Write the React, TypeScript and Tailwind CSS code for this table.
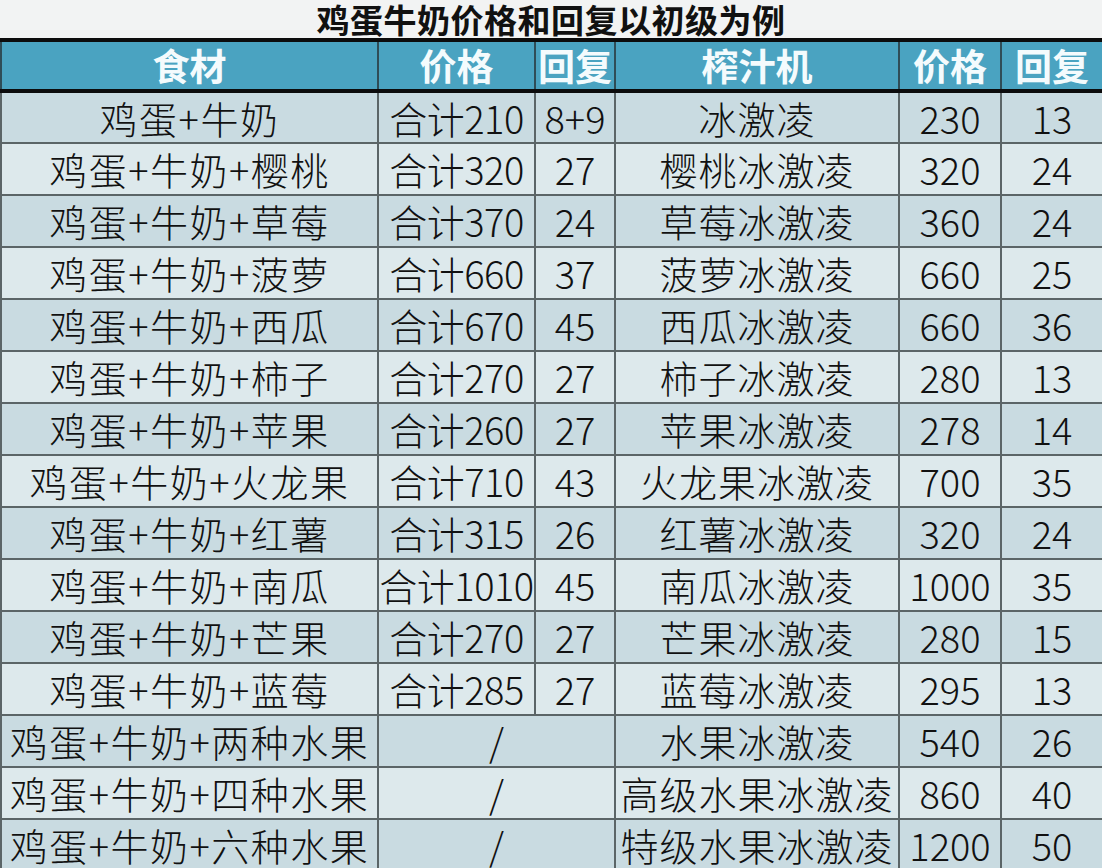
const rows = [
  { food: "鸡蛋+牛奶", price: "合计210", heal: "8+9", juice: "冰激凌", jp: "230", jh: "13" },
  { food: "鸡蛋+牛奶+樱桃", price: "合计320", heal: "27", juice: "樱桃冰激凌", jp: "320", jh: "24" },
  { food: "鸡蛋+牛奶+草莓", price: "合计370", heal: "24", juice: "草莓冰激凌", jp: "360", jh: "24" },
  { food: "鸡蛋+牛奶+菠萝", price: "合计660", heal: "37", juice: "菠萝冰激凌", jp: "660", jh: "25" },
  { food: "鸡蛋+牛奶+西瓜", price: "合计670", heal: "45", juice: "西瓜冰激凌", jp: "660", jh: "36" },
  { food: "鸡蛋+牛奶+柿子", price: "合计270", heal: "27", juice: "柿子冰激凌", jp: "280", jh: "13" },
  { food: "鸡蛋+牛奶+苹果", price: "合计260", heal: "27", juice: "苹果冰激凌", jp: "278", jh: "14" },
  { food: "鸡蛋+牛奶+火龙果", price: "合计710", heal: "43", juice: "火龙果冰激凌", jp: "700", jh: "35" },
  { food: "鸡蛋+牛奶+红薯", price: "合计315", heal: "26", juice: "红薯冰激凌", jp: "320", jh: "24" },
  { food: "鸡蛋+牛奶+南瓜", price: "合计1010", heal: "45", juice: "南瓜冰激凌", jp: "1000", jh: "35" },
  { food: "鸡蛋+牛奶+芒果", price: "合计270", heal: "27", juice: "芒果冰激凌", jp: "280", jh: "15" },
  { food: "鸡蛋+牛奶+蓝莓", price: "合计285", heal: "27", juice: "蓝莓冰激凌", jp: "295", jh: "13" },
  { food: "鸡蛋+牛奶+两种水果", price: null, heal: null, juice: "水果冰激凌", jp: "540", jh: "26" },
  { food: "鸡蛋+牛奶+四种水果", price: null, heal: null, juice: "高级水果冰激凌", jp: "860", jh: "40" },
  { food: "鸡蛋+牛奶+六种水果", price: null, heal: null, juice: "特级水果冰激凌", jp: "1200", jh: "50" },
];

const heads = ["食材", "价格", "回复", "榨汁机", "价格", "回复"];

const cell = "border-2 border-[#5b6567] p-0 text-center text-[38px] font-light leading-none whitespace-nowrap";

export default function App() {
  return (
    <div
      className="w-[1102px] h-[868px] overflow-hidden bg-[#f2f3f3] text-[#111]"
      style={{ fontFamily: '"Noto Sans CJK SC", "Noto Sans", sans-serif' }}
    >
      <h1 className="h-[38px] text-center text-[33px] font-bold leading-[38px] tracking-[0.5px]">
        鸡蛋牛奶价格和回复以初级为例
      </h1>
      <table className="w-[1102px] table-fixed border-collapse">
        <colgroup>
          <col className="w-[377px]" />
          <col className="w-[157px]" />
          <col className="w-[80px]" />
          <col className="w-[284px]" />
          <col className="w-[102px]" />
          <col className="w-[102px]" />
        </colgroup>
        <thead>
          <tr className="h-[51px] bg-[#4aa3c1]">
            {heads.map((h, i) => (
              <th
                key={i}
                className="border-y-4 border-x-2 border-y-[#0c0c0c] border-x-[#2f4d57] p-0 text-[37px] font-bold leading-none text-[#f4fbfd]"
              >
                {h}
              </th>
            ))}
          </tr>
        </thead>
        <tbody>
          {rows.map((r, i) => (
            <tr key={i} className={`h-[52px] ${i % 2 === 0 ? "bg-[#c9dbe1]" : "bg-[#dde9ec]"}`}>
              <td className={`${cell} tracking-[1.5px]`}>{r.food}</td>
              {r.price ? (
                <>
                  <td className={`${cell} tracking-[-0.5px]`}>{r.price}</td>
                  <td className={cell}>{r.heal}</td>
                </>
              ) : (
                <td colSpan={2} className={cell}>
                  /
                </td>
              )}
              <td className={`${cell} tracking-[1px]`}>{r.juice}</td>
              <td className={cell}>{r.jp}</td>
              <td className={cell}>{r.jh}</td>
            </tr>
          ))}
        </tbody>
      </table>
    </div>
  );
}
